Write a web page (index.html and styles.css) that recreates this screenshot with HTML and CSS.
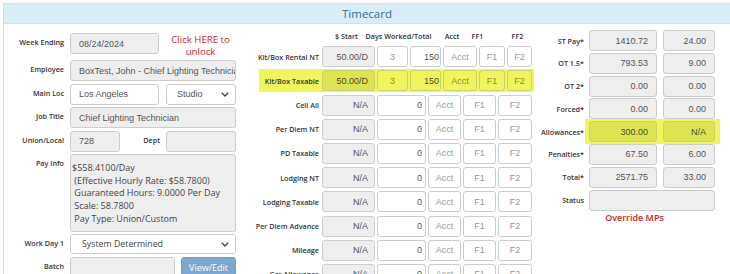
FILE: index.html
```html
<!DOCTYPE html>
<html>
<head>
<meta charset="utf-8">
<title>Timecard</title>
<link rel="stylesheet" href="styles.css">
</head>
<body>
<div class="page">
  <div class="panel">
    <div class="panel-heading">Timecard</div>
    <div class="panel-body">

      <div class="col-left">
        <div class="lbl">Week Ending</div>
        <div class="fields">
          <div class="box ro w-we">08/24/2024</div>
          <div class="unlock">Click HERE to<br>unlock</div>
        </div>

        <div class="lbl">Employee</div>
        <div class="fields">
          <div class="box ro w-full">BoxTest, John - Chief Lighting Technician</div>
        </div>

        <div class="lbl">Main Loc</div>
        <div class="fields">
          <div class="box w-we">Los Angeles</div>
          <div class="box sel w-side"><span>Studio</span><svg class="chev" width="8" height="5" viewBox="0 0 8 5"><path d="M0.8 0.8 L4 4 L7.2 0.8" fill="none" stroke="#444" stroke-width="1.4"/></svg></div>
        </div>

        <div class="lbl">Job Title</div>
        <div class="fields">
          <div class="box ro w-full">Chief Lighting Technician</div>
        </div>

        <div class="lbl">Union/Local</div>
        <div class="fields">
          <div class="box ro w-union">728</div>
          <div class="lbl lbl-inline">Dept</div>
          <div class="box ro w-side"></div>
        </div>

        <div class="lbl">Pay Info</div>
        <div class="fields">
          <div class="payinfo">$558.4100/Day
 (Effective Hourly Rate: $58.7800)
 Guaranteed Hours: 9.0000 Per Day
 Scale: 58.7800
 Pay Type: Union/Custom</div>
        </div>

        <div class="lbl">Work Day 1</div>
        <div class="fields">
          <div class="box sel sel-os w-full wd"><span>System Determined</span><svg class="chev" width="8" height="5" viewBox="0 0 8 5"><path d="M0.8 0.8 L4 4 L7.2 0.8" fill="none" stroke="#444" stroke-width="1.4"/></svg></div>
        </div>

        <div class="lbl">Batch</div>
        <div class="fields">
          <div class="box ro w-batch"></div>
          <div class="btn">View/Edit</div>
        </div>
      </div>

      <div class="col-mid">
        <div class="mhead">
          <div class="h h-start"><span>$ Start</span></div>
          <div class="h h-days"><span>Days Worked/Total</span></div>
          <div class="h h-acct"><span>Acct</span></div>
          <div class="h h-ff1"><span>FF1</span></div>
          <div class="h h-ff2"><span>FF2</span></div>
        </div>

        <div class="mrow">
          <div class="mlbl">Kit/Box Rental NT</div>
          <div class="mfields">
            <div class="box ro k-start">50.00/D</div>
            <div class="box k-days ph">3</div>
            <div class="box k-total">150</div>
            <div class="box k-acct ph">Acct</div>
            <div class="box k-f1 ph">F1</div>
            <div class="box k-f2 ph">F2</div>
          </div>
        </div>

        <div class="mrow hl">
          <div class="mlbl">Kit/Box Taxable</div>
          <div class="mfields">
            <div class="box ro k-start">50.00/D</div>
            <div class="box k-days ph">3</div>
            <div class="box k-total">150</div>
            <div class="box k-acct ph">Acct</div>
            <div class="box k-f1 ph">F1</div>
            <div class="box k-f2 ph">F2</div>
          </div>
        </div>

        <div class="mrow">
          <div class="mlbl">Cell All</div>
          <div class="mfields">
            <div class="box ro k-start">N/A</div>
            <div class="box a-amt">0</div>
            <div class="box a-acct ph">Acct</div>
            <div class="box a-f1 ph">F1</div>
            <div class="box a-f2 ph">F2</div>
          </div>
        </div>

        <div class="mrow">
          <div class="mlbl">Per Diem NT</div>
          <div class="mfields">
            <div class="box ro k-start">N/A</div>
            <div class="box a-amt">0</div>
            <div class="box a-acct ph">Acct</div>
            <div class="box a-f1 ph">F1</div>
            <div class="box a-f2 ph">F2</div>
          </div>
        </div>

        <div class="mrow">
          <div class="mlbl">PD Taxable</div>
          <div class="mfields">
            <div class="box ro k-start">N/A</div>
            <div class="box a-amt">0</div>
            <div class="box a-acct ph">Acct</div>
            <div class="box a-f1 ph">F1</div>
            <div class="box a-f2 ph">F2</div>
          </div>
        </div>

        <div class="mrow">
          <div class="mlbl">Lodging NT</div>
          <div class="mfields">
            <div class="box ro k-start">N/A</div>
            <div class="box a-amt">0</div>
            <div class="box a-acct ph">Acct</div>
            <div class="box a-f1 ph">F1</div>
            <div class="box a-f2 ph">F2</div>
          </div>
        </div>

        <div class="mrow">
          <div class="mlbl">Lodging Taxable</div>
          <div class="mfields">
            <div class="box ro k-start">N/A</div>
            <div class="box a-amt">0</div>
            <div class="box a-acct ph">Acct</div>
            <div class="box a-f1 ph">F1</div>
            <div class="box a-f2 ph">F2</div>
          </div>
        </div>

        <div class="mrow">
          <div class="mlbl">Per Diem Advance</div>
          <div class="mfields">
            <div class="box ro k-start">N/A</div>
            <div class="box a-amt">0</div>
            <div class="box a-acct ph">Acct</div>
            <div class="box a-f1 ph">F1</div>
            <div class="box a-f2 ph">F2</div>
          </div>
        </div>

        <div class="mrow">
          <div class="mlbl">Mileage</div>
          <div class="mfields">
            <div class="box ro k-start">N/A</div>
            <div class="box a-amt">0</div>
            <div class="box a-acct ph">Acct</div>
            <div class="box a-f1 ph">F1</div>
            <div class="box a-f2 ph">F2</div>
          </div>
        </div>

        <div class="mrow">
          <div class="mlbl">Car Allowance</div>
          <div class="mfields">
            <div class="box ro k-start">N/A</div>
            <div class="box a-amt">0</div>
            <div class="box a-acct ph">Acct</div>
            <div class="box a-f1 ph">F1</div>
            <div class="box a-f2 ph">F2</div>
          </div>
        </div>
      </div>

      <div class="col-right">
        <div class="rrow">
          <div class="rlbl">ST Pay*</div>
          <div class="rfields"><div class="box ro r1">1410.72</div><div class="box ro r2">24.00</div></div>
        </div>
        <div class="rrow">
          <div class="rlbl">OT 1.5*</div>
          <div class="rfields"><div class="box ro r1">793.53</div><div class="box ro r2">9.00</div></div>
        </div>
        <div class="rrow">
          <div class="rlbl">OT 2*</div>
          <div class="rfields"><div class="box ro r1">0.00</div><div class="box ro r2">0.00</div></div>
        </div>
        <div class="rrow">
          <div class="rlbl">Forced*</div>
          <div class="rfields"><div class="box ro r1">0.00</div><div class="box ro r2">0.00</div></div>
        </div>
        <div class="rrow">
          <div class="rlbl">Allowances*</div>
          <div class="rfields hl"><div class="box ro r1">300.00</div><div class="box ro r2">N/A</div></div>
        </div>
        <div class="rrow">
          <div class="rlbl">Penalties*</div>
          <div class="rfields"><div class="box ro r1">67.50</div><div class="box ro r2">6.00</div></div>
        </div>
        <div class="rrow">
          <div class="rlbl">Total*</div>
          <div class="rfields"><div class="box ro r1">2571.75</div><div class="box ro r2">33.00</div></div>
        </div>
        <div class="rrow">
          <div class="rlbl">Status</div>
          <div class="rfields"><div class="box ro rstatus"></div></div>
        </div>
        <div class="override">Override MPs</div>
      </div>

    </div>
  </div>
</div>
</body>
</html>
```

FILE: styles.css
```css
* { box-sizing: border-box; }

html, body {
  margin: 0;
  padding: 0;
  background: #fff;
}

body {
  width: 730px;
  height: 274px;
  overflow: hidden;
  font-family: "Open Sans", "Liberation Sans", Arial, sans-serif;
  color: #333;
}

.page {
  padding: 3px 0 0 3px;
}

.panel {
  width: 728px;
  height: 290px;
  border: 1px solid #bce8f1;
}

.panel-heading {
  height: 20px;
  background: #d9edf7;
  border-bottom: 1px solid #bce8f1;
  color: #31708f;
  text-align: center;
  font-size: 11.5px;
  line-height: 19px;
}

.panel-body {
  display: flex;
  align-items: flex-start;
  padding: 9px 0 0 6px;
}

/* generic field box */
.box {
  height: 21px;
  border: 1px solid #ccc;
  border-radius: 3px;
  background: #fff;
  font-family: "Liberation Sans", Arial, sans-serif;
  font-size: 9px;
  color: #555;
  display: flex;
  align-items: center;
  padding: 0 8px;
  white-space: nowrap;
  overflow: hidden;
  flex: none;
}

.ro { background: #eee; }
.ph { color: #999; }

/* left column */
.col-left {
  width: 226px;
  display: grid;
  grid-template-columns: 54px 166px;
  column-gap: 6px;
  row-gap: 2.4px;
}

.lbl {
  font-size: 7.2px;
  font-weight: 600;
  line-height: 10px;
  padding-top: 4px;
  text-align: right;
  white-space: nowrap;
  color: #333;
}

.fields {
  display: flex;
  align-items: flex-start;
}

.w-we { width: 89px; }
.w-full { width: 166px; }
.w-side { width: 70px; margin-left: 7px; }
.w-union { width: 50px; }
.w-batch { width: 105px; }

.lbl-inline {
  width: 40px;
  flex: none;
}
.lbl-inline + .w-side { margin-left: 6px; }

.unlock {
  width: 72px;
  margin-left: 6px;
  padding-top: 1px;
  text-align: center;
  color: #c9252b;
  font-size: 9.6px;
  line-height: 12px;
}

.sel {
  justify-content: space-between;
  padding: 0 6px 0 10px;
}

.sel-os {
  font-family: "Open Sans", "Liberation Sans", Arial, sans-serif;
  font-size: 8.8px;
  color: #444;
}

.wd {
  height: 20px;
  padding-left: 11px;
}

.chev { flex: none; }

.payinfo {
  width: 166px;
  height: 78px;
  border: 1px solid #ccc;
  border-radius: 3px;
  background: #eee;
  padding: 7px 1px 0 1px;
  font-size: 9px;
  line-height: 12.75px;
  color: #444;
  white-space: pre;
  overflow: hidden;
}

.btn {
  width: 55px;
  height: 24px;
  margin-left: 6px;
  background: #7aa8d0;
  border: 1px solid #77a0c4;
  border-radius: 3px;
  color: #fff;
  font-size: 9px;
  text-align: center;
  line-height: 20px;
  flex: none;
}

/* middle column */
.col-mid {
  width: 292px;
  margin-left: 4px;
  display: flex;
  flex-direction: column;
  gap: 3.2px;
}

.mhead {
  display: flex;
  height: 13px;
  margin-top: -3px;
  margin-left: 82px;
  font-size: 7.2px;
  font-weight: 600;
  line-height: 13px;
  color: #333;
}

.h {
  display: flex;
  justify-content: center;
  white-space: nowrap;
  flex: none;
}

.h-start { width: 49px; }
.h-days { width: 55px; }
.h-acct { width: 24px; margin-left: 14px; }
.h-ff1 { width: 23px; margin-left: 2px; }
.h-ff2 { width: 23px; margin-left: 17px; }

.mrow {
  display: grid;
  grid-template-columns: 79px 210px;
  column-gap: 3px;
  align-items: center;
}

.mlbl {
  font-size: 7.2px;
  font-weight: 600;
  line-height: 10px;
  text-align: right;
  white-space: nowrap;
}

.mfields {
  display: flex;
  gap: 2px;
}

.k-start { width: 53px; justify-content: flex-end; padding-right: 6px; }
.k-days { width: 31px; justify-content: center; }
.k-total { width: 31px; justify-content: flex-end; padding-right: 1px; }
.k-acct { width: 34px; justify-content: center; padding: 0; }
.k-f1 { width: 26px; justify-content: center; padding: 0; }
.k-f2 { width: 25px; justify-content: center; padding: 0; }

.a-amt { width: 49px; justify-content: flex-end; padding-right: 3px; }
.a-acct { width: 33px; justify-content: center; padding: 0; }
.a-f1 { width: 33px; justify-content: center; padding: 0; }
.a-f2 { width: 34px; justify-content: center; padding: 0; }

.mrow.hl {
  margin: -1px -2px -1px 0;
  padding: 1px 2px 1px 0;
  background: linear-gradient(90deg, transparent 19px, #eef55d 19px);
}

.hl .box {
  background: transparent;
  border-color: #cdd26a;
  color: #4a4c20;
}

.hl .box.ro {
  background: #dde453;
}

.hl .box.ph {
  color: #8c9030;
}

/* right column */
.col-right {
  width: 179px;
  margin-left: 4px;
  margin-top: -3px;
  display: flex;
  flex-direction: column;
  gap: 1.8px;
}

.rrow {
  display: grid;
  grid-template-columns: 48px 126px;
  column-gap: 5px;
  align-items: center;
}

.rlbl {
  font-size: 7.2px;
  font-weight: 600;
  line-height: 10px;
  text-align: right;
  white-space: nowrap;
}

.rfields {
  display: flex;
  gap: 6px;
}

.rrow .box {
  justify-content: flex-end;
}

.r1 { width: 68px; }
.r2 { width: 52px; }
.rstatus { width: 126px; }

.rfields.hl {
  margin: -2px -5px -2px -4px;
  padding: 2px 5px 2px 4px;
  background: #eef55d;
}

.override {
  margin-top: 0;
  padding-left: 9px;
  width: 188px;
  text-align: center;
  color: #c9252b;
  font-size: 9px;
  font-weight: 600;
  line-height: 12px;
}
```
